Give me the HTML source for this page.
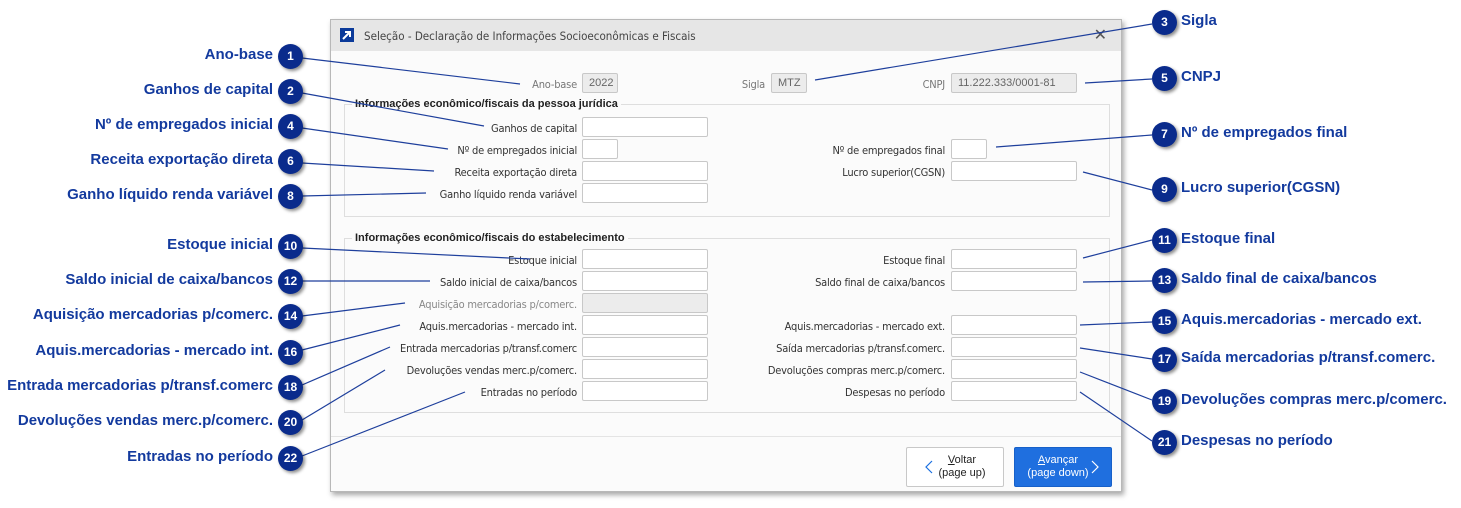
<!DOCTYPE html><html><head><meta charset="utf-8"><style>
*{box-sizing:border-box;margin:0;padding:0}
body{width:1461px;height:508px;background:#fff;position:relative;overflow:hidden;font-family:"Liberation Sans",sans-serif}
.dlg{position:absolute;left:330px;top:19px;width:792px;height:473px;background:#fbfbfb;border:1px solid #b8b8b8;box-shadow:2px 3px 5px rgba(0,0,0,.35)}
.tb{position:absolute;left:0;top:0;width:100%;height:31px;background:#e6e6e6}
.tb span{position:absolute;left:33px;top:9px;font-size:11.5px;color:#444;font-family:"DejaVu Sans Condensed","Liberation Sans",sans-serif;font-stretch:condensed}
.ic{position:absolute;left:9px;top:8px;width:14px;height:14px;background:#0b3a9a}
.x{position:absolute;right:14px;top:5px;font-size:16px;color:#555}
.l{position:absolute;font-size:11px;color:#333;text-align:right;white-space:nowrap;font-family:"DejaVu Sans Condensed","Liberation Sans",sans-serif;font-stretch:condensed;letter-spacing:-.2px}
.i{position:absolute;height:20px;background:#fff;border:1px solid #c8c8c8;border-radius:2px}
.g{background:#ececec;color:#666;font-size:11px;padding:3px 0 0 6px}
.gb{position:absolute;border:1px solid #dedede}
.gt{position:absolute;font-size:11px;font-weight:bold;color:#222;background:#fbfbfb;padding:0 3px}
.c{position:absolute;width:25px;height:25px;border-radius:50%;background:#0a2b8c;color:#fff;font-size:12px;font-weight:bold;text-align:center;line-height:25px;box-shadow:2px 2px 3px rgba(0,0,0,.45);font-family:"Liberation Sans",sans-serif}
.t{position:absolute;font-size:15px;font-weight:bold;color:#133a9e;white-space:nowrap}
.tl{text-align:right;width:280px;left:-7px}
.btn{position:absolute;top:447px;height:40px;width:98px;border-radius:2px;font-size:11px;text-align:center;padding-top:6px;line-height:13px}
</style></head><body>
<div class="dlg">
<div class="tb"><div class="ic"><svg width="14" height="14"><path d="M3 11L10 4M5 4H10V9" stroke="#fff" stroke-width="2" fill="none"/></svg></div><span>Seleção - Declaração de Informações Socioeconômicas e Fiscais</span><div class="x">✕</div></div>
<div style="position:absolute;left:0;top:416px;width:100%;border-top:1px solid #e4e4e4"></div>
</div>
<div class="gb" style="left:344px;top:104px;width:766px;height:113px"></div>
<div class="gt" style="left:352px;top:98px">Informações econômico/fiscais da pessoa jurídica</div>
<div class="gb" style="left:344px;top:238px;width:766px;height:175px"></div>
<div class="gt" style="left:352px;top:232px">Informações econômico/fiscais do estabelecimento</div>

<div class="l" style="right:884px;top:78px;color:#777">Ano-base</div><div class="i g" style="left:582px;top:73px;width:36px">2022</div>
<div class="l" style="right:696px;top:78px;color:#777">Sigla</div><div class="i g" style="left:771px;top:73px;width:36px">MTZ</div>
<div class="l" style="right:516px;top:78px;color:#777">CNPJ</div><div class="i g" style="left:951px;top:73px;width:126px">11.222.333/0001-81</div>

<div class="l" style="right:884px;top:122px">Ganhos de capital</div><div class="i" style="left:582px;top:117px;width:126px"></div>
<div class="l" style="right:884px;top:144px">Nº de empregados inicial</div><div class="i" style="left:582px;top:139px;width:36px"></div>
<div class="l" style="right:884px;top:166px">Receita exportação direta</div><div class="i" style="left:582px;top:161px;width:126px"></div>
<div class="l" style="right:884px;top:188px">Ganho líquido renda variável</div><div class="i" style="left:582px;top:183px;width:126px"></div>
<div class="l" style="right:516px;top:144px">Nº de empregados final</div><div class="i" style="left:951px;top:139px;width:36px"></div>
<div class="l" style="right:516px;top:166px">Lucro superior(CGSN)</div><div class="i" style="left:951px;top:161px;width:126px"></div>

<div class="l" style="right:884px;top:254px">Estoque inicial</div><div class="i" style="left:582px;top:249px;width:126px"></div>
<div class="l" style="right:884px;top:276px">Saldo inicial de caixa/bancos</div><div class="i" style="left:582px;top:271px;width:126px"></div>
<div class="l" style="right:884px;top:298px;color:#888">Aquisição mercadorias p/comerc.</div><div class="i g" style="left:582px;top:293px;width:126px"></div>
<div class="l" style="right:884px;top:320px">Aquis.mercadorias - mercado int.</div><div class="i" style="left:582px;top:315px;width:126px"></div>
<div class="l" style="right:884px;top:342px">Entrada mercadorias p/transf.comerc</div><div class="i" style="left:582px;top:337px;width:126px"></div>
<div class="l" style="right:884px;top:364px">Devoluções vendas merc.p/comerc.</div><div class="i" style="left:582px;top:359px;width:126px"></div>
<div class="l" style="right:884px;top:386px">Entradas no período</div><div class="i" style="left:582px;top:381px;width:126px"></div>
<div class="l" style="right:516px;top:254px">Estoque final</div><div class="i" style="left:951px;top:249px;width:126px"></div>
<div class="l" style="right:516px;top:276px">Saldo final de caixa/bancos</div><div class="i" style="left:951px;top:271px;width:126px"></div>
<div class="l" style="right:516px;top:320px">Aquis.mercadorias - mercado ext.</div><div class="i" style="left:951px;top:315px;width:126px"></div>
<div class="l" style="right:516px;top:342px">Saída mercadorias p/transf.comerc.</div><div class="i" style="left:951px;top:337px;width:126px"></div>
<div class="l" style="right:516px;top:364px">Devoluções compras merc.p/comerc.</div><div class="i" style="left:951px;top:359px;width:126px"></div>
<div class="l" style="right:516px;top:386px">Despesas no período</div><div class="i" style="left:951px;top:381px;width:126px"></div>

<div class="btn" style="left:906px;background:#fff;border:1px solid #c8c8c8;color:#222"><svg style="position:absolute;left:18px;top:12px" width="8" height="14"><path d="M7 1L1 7L7 13" stroke="#1a6fe0" stroke-width="1.2" fill="none"/></svg><span style="padding-left:14px;display:inline-block"><u>V</u>oltar<br>(page up)</span></div>
<div class="btn" style="left:1014px;background:#1f6fdf;color:#fff;border:1px solid #1760c8"><span style="display:inline-block;padding-right:10px"><u>A</u>vançar<br>(page down)</span><svg style="position:absolute;right:12px;top:12px" width="8" height="14"><path d="M1 1L7 7L1 13" stroke="#fff" stroke-width="1.2" fill="none"/></svg></div>

<svg style="position:absolute;left:0;top:0" width="1461" height="508"><g stroke="#1e3f9c" stroke-width="1.2">
<line x1="302" y1="58" x2="520" y2="84"/><line x1="302" y1="93" x2="484" y2="126"/><line x1="302" y1="128" x2="448" y2="149"/><line x1="302" y1="163" x2="434" y2="171"/><line x1="302" y1="196" x2="426" y2="193"/><line x1="302" y1="248" x2="530" y2="259"/><line x1="302" y1="281" x2="430" y2="281"/><line x1="302" y1="316" x2="405" y2="303"/><line x1="302" y1="350" x2="400" y2="325"/><line x1="302" y1="385" x2="390" y2="347"/><line x1="302" y1="420" x2="385" y2="370"/><line x1="302" y1="456" x2="465" y2="392"/>
<line x1="1152" y1="24" x2="815" y2="80"/><line x1="1152" y1="79" x2="1085" y2="83"/><line x1="1152" y1="135" x2="996" y2="147"/><line x1="1152" y1="190" x2="1083" y2="172"/><line x1="1152" y1="240" x2="1083" y2="258"/><line x1="1152" y1="281" x2="1083" y2="282"/><line x1="1152" y1="322" x2="1080" y2="325"/><line x1="1152" y1="359" x2="1080" y2="348"/><line x1="1152" y1="400" x2="1080" y2="372"/><line x1="1152" y1="441" x2="1080" y2="392"/>
</g></svg>

<div class="c" style="left:278px;top:44px">1</div><div class="t tl" style="top:46px">Ano-base</div>
<div class="c" style="left:278px;top:79px">2</div><div class="t tl" style="top:81px">Ganhos de capital</div>
<div class="c" style="left:278px;top:114px">4</div><div class="t tl" style="top:116px">Nº de empregados inicial</div>
<div class="c" style="left:278px;top:149px">6</div><div class="t tl" style="top:151px">Receita exportação direta</div>
<div class="c" style="left:278px;top:184px">8</div><div class="t tl" style="top:186px">Ganho líquido renda variável</div>
<div class="c" style="left:278px;top:234px">10</div><div class="t tl" style="top:236px">Estoque inicial</div>
<div class="c" style="left:278px;top:269px">12</div><div class="t tl" style="top:271px">Saldo inicial de caixa/bancos</div>
<div class="c" style="left:278px;top:304px">14</div><div class="t tl" style="top:306px">Aquisição mercadorias p/comerc.</div>
<div class="c" style="left:278px;top:340px">16</div><div class="t tl" style="top:342px">Aquis.mercadorias - mercado int.</div>
<div class="c" style="left:278px;top:375px">18</div><div class="t tl" style="top:377px">Entrada mercadorias p/transf.comerc</div>
<div class="c" style="left:278px;top:410px">20</div><div class="t tl" style="top:412px">Devoluções vendas merc.p/comerc.</div>
<div class="c" style="left:278px;top:446px">22</div><div class="t tl" style="top:448px">Entradas no período</div>

<div class="c" style="left:1152px;top:10px">3</div><div class="t" style="left:1181px;top:12px">Sigla</div>
<div class="c" style="left:1152px;top:66px">5</div><div class="t" style="left:1181px;top:68px">CNPJ</div>
<div class="c" style="left:1152px;top:122px">7</div><div class="t" style="left:1181px;top:124px">Nº de empregados final</div>
<div class="c" style="left:1152px;top:177px">9</div><div class="t" style="left:1181px;top:179px">Lucro superior(CGSN)</div>
<div class="c" style="left:1152px;top:228px">11</div><div class="t" style="left:1181px;top:230px">Estoque final</div>
<div class="c" style="left:1152px;top:268px">13</div><div class="t" style="left:1181px;top:270px">Saldo final de caixa/bancos</div>
<div class="c" style="left:1152px;top:309px">15</div><div class="t" style="left:1181px;top:311px">Aquis.mercadorias - mercado ext.</div>
<div class="c" style="left:1152px;top:347px">17</div><div class="t" style="left:1181px;top:349px">Saída mercadorias p/transf.comerc.</div>
<div class="c" style="left:1152px;top:389px">19</div><div class="t" style="left:1181px;top:391px">Devoluções compras merc.p/comerc.</div>
<div class="c" style="left:1152px;top:430px">21</div><div class="t" style="left:1181px;top:432px">Despesas no período</div>
</body></html>
